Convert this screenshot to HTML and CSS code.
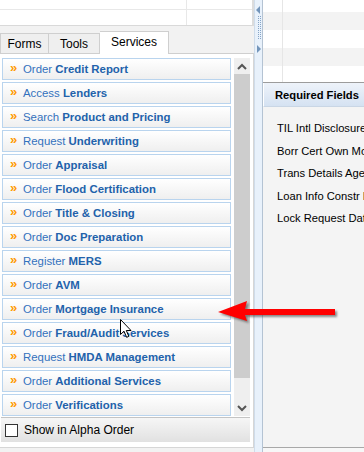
FILE: index.html
```
<!DOCTYPE html>
<html>
<head>
<meta charset="utf-8">
<link rel="stylesheet" href="styles.css">
</head>
<body>
<div class="app">
  <div class="left">
    <div class="topgrid">
      <div class="tg-row tg-first"><div class="tg-c1"></div><div class="tg-c2"></div></div>
      <div class="tg-row tg-second"><div class="tg-c1"></div><div class="tg-c2"></div></div>
    </div>
    <div class="tabs">
      <div class="tab tab-forms">Forms</div>
      <div class="tab tab-tools">Tools</div>
      <div class="tab tab-active">Services</div>
    </div>
    <div class="panel">
      <div class="list">
        <div class="items">
          <div class="item"><span class="raquo">»</span><span>Order <b>Credit Report</b></span></div>
          <div class="item"><span class="raquo">»</span><span>Access <b>Lenders</b></span></div>
          <div class="item"><span class="raquo">»</span><span>Search <b>Product and Pricing</b></span></div>
          <div class="item"><span class="raquo">»</span><span>Request <b>Underwriting</b></span></div>
          <div class="item"><span class="raquo">»</span><span>Order <b>Appraisal</b></span></div>
          <div class="item"><span class="raquo">»</span><span>Order <b>Flood Certification</b></span></div>
          <div class="item"><span class="raquo">»</span><span>Order <b>Title &amp; Closing</b></span></div>
          <div class="item"><span class="raquo">»</span><span>Order <b>Doc Preparation</b></span></div>
          <div class="item"><span class="raquo">»</span><span>Register <b>MERS</b></span></div>
          <div class="item"><span class="raquo">»</span><span>Order <b>AVM</b></span></div>
          <div class="item"><span class="raquo">»</span><span>Order <b>Mortgage Insurance</b></span></div>
          <div class="item"><span class="raquo">»</span><span>Order <b>Fraud/Audit Services</b></span></div>
          <div class="item"><span class="raquo">»</span><span>Request <b>HMDA Management</b></span></div>
          <div class="item"><span class="raquo">»</span><span>Order <b>Additional Services</b></span></div>
          <div class="item"><span class="raquo">»</span><span>Order <b>Verifications</b></span></div>
        </div>
        <div class="scrollbar">
          <div class="sb-btn"><svg width="10" height="7" viewBox="0 0 10 7"><path d="M1 6 L5 2 L9 6" fill="none" stroke="#555" stroke-width="2"/></svg></div>
          <div class="sb-track"><div class="sb-thumb"></div></div>
          <div class="sb-btn"><svg width="10" height="7" viewBox="0 0 10 7"><path d="M1 1 L5 5 L9 1" fill="none" stroke="#555" stroke-width="2"/></svg></div>
        </div>
      </div>
      <div class="alpha"><span class="checkbox"></span><span>Show in Alpha Order</span></div>
    </div>
  </div>
  <div class="splitter">
    <div class="sp-arrow sp-left"></div>
    <div class="sp-dots"></div>
    <div class="sp-arrow sp-right"></div>
  </div>
  <div class="right">
    <div class="rgrid">
      <div class="rrow r-white r-h12"><div class="rc1"></div></div>
      <div class="rrow r-gray"><div class="rc1"></div></div>
      <div class="rrow r-white"><div class="rc1"></div></div>
      <div class="rrow r-gray"><div class="rc1"></div></div>
      <div class="rrow r-white r-last"><div class="rc1"></div></div>
    </div>
    <div class="rhead">Required Fields</div>
    <div class="rbody">
      <div>TIL Intl Disclosure</div>
      <div>Borr Cert Own Mortgage</div>
      <div>Trans Details Agency</div>
      <div>Loan Info Constr Loan</div>
      <div>Lock Request Date</div>
    </div>
  </div>
</div>
<svg class="redarrow" width="140" height="34" viewBox="0 0 140 34">
  <defs>
    <filter id="sh" x="-10%" y="-30%" width="130%" height="180%">
      <feGaussianBlur stdDeviation="1.2"/>
    </filter>
  </defs>
  <g transform="translate(2,2)" opacity="0.55" filter="url(#sh)">
    <polygon points="8,16 37,5 35,13 125,13 125,19 35,19 37,25" fill="#333"/>
  </g>
  <polygon points="8,16 37,5 35,13 125,13 125,19 35,19 37,25" fill="#ff0000"/>
</svg>
<svg class="cursor" width="13" height="20" viewBox="0 0 13 20">
  <path d="M0.5 0.5 L0.5 15.5 L4 12.2 L6.6 18.3 L8.8 17.4 L6.3 11.5 L11 11.5 Z" fill="#fff" stroke="#000" stroke-width="1"/>
</svg>
</body>
</html>
```
FILE: styles.css
```
* { box-sizing: border-box; }
html, body { margin: 0; padding: 0; }
body {
  width: 364px;
  height: 452px;
  overflow: hidden;
  background: #f7f7f7;
  font-family: "Liberation Sans", Arial, sans-serif;
  font-size: 12px;
  position: relative;
}
.app {
  display: flex;
  width: 364px;
  height: 452px;
  overflow: hidden;
}
.left {
  width: 254px;
  flex: none;
  background: #f2f2f2;
  display: flex;
  flex-direction: column;
}
.topgrid {
  height: 26px;
  background: #fff;
  border-bottom: 1px solid #d9d9d9;
  border-right: 2px solid #dcdcdc;
  display: flex;
  flex-direction: column;
}
.tg-row { display: flex; }
.tg-first { height: 10px; border-bottom: 1px solid #e8e8e8; }
.tg-second { flex: 1; }
.tg-c1 { width: 187px; border-right: 1px solid #e8e8e8; }
.tg-c2 { flex: 1; }
.tabs {
  height: 27px;
  display: flex;
  align-items: flex-end;
}
.tab {
  height: 20px;
  background: #efefef;
  border: 1px solid #cfcfcf;
  border-bottom: none;
  display: flex;
  align-items: center;
  justify-content: center;
  color: #000;
  font-size: 12px;
}
.tab-forms { width: 49px; }
.tab-tools { width: 51px; border-left: none; }
.tab-active {
  width: 69px;
  height: 23px;
  background: #fff;
  border-left: none;
  margin-bottom: -1px;
  position: relative;
  padding-bottom: 2px;
}
.panel {
  background: #fff;
  border-top: 1px solid #cfcfcf;
  border-right: 1px solid #d6d6d6;
  border-bottom: 1px solid #d6d6d6;
  padding: 4px 3px 5px 2px;
  display: flex;
  flex-direction: column;
}
.list {
  display: flex;
  gap: 3px;
}
.items {
  width: 230px;
  display: flex;
  flex-direction: column;
  gap: 2px;
}
.item {
  height: 22px;
  border: 1px solid #b9d4ee;
  background: linear-gradient(#ffffff, #efefef);
  display: flex;
  align-items: center;
  padding-left: 7px;
  color: #3371bd;
  font-size: 11.4px;
  white-space: nowrap;
}
.item b { color: #2262ab; }
.raquo {
  width: 13px;
  color: #ff9a00;
  font-weight: bold;
  font-size: 13px;
  line-height: 12px;
  margin-top: -2px;
}
.scrollbar {
  width: 16px;
  background: #efefef;
  display: flex;
  flex-direction: column;
}
.sb-btn {
  height: 16px;
  display: flex;
  align-items: center;
  justify-content: center;
}
.sb-track {
  flex: 1;
  display: flex;
  flex-direction: column;
}
.sb-thumb {
  height: 304px;
  background: #cdcdcd;
}
.alpha {
  margin-top: 1px;
  margin-left: -1px;
  height: 25px;
  border-top: 1px solid #c4c4c4;
  background: linear-gradient(#f6f6f6, #e1e1e1);
  display: flex;
  align-items: center;
  gap: 6px;
  padding-left: 4px;
  color: #000;
}
.checkbox {
  width: 13px;
  height: 13px;
  border: 1px solid #333;
  background: #fff;
}
.splitter {
  width: 9px;
  flex: none;
  background: #e8f1fb;
  border-left: 1px solid #cfdcea;
  border-right: 1px solid #b4c3d3;
  display: flex;
  flex-direction: column;
  align-items: center;
  padding-top: 6px;
}
.sp-arrow {
  width: 0;
  height: 0;
  border-top: 4px solid transparent;
  border-bottom: 4px solid transparent;
}
.sp-left { border-right: 4px solid #7395bb; margin-left: -1px; }
.sp-right { border-left: 4px solid #7395bb; margin-left: 1px; }
.sp-dots {
  width: 3px;
  height: 23px;
  margin: 2px 0 6px 1px;
  border-left: 1px dotted #86a4c6;
  border-right: 1px dotted #86a4c6;
}
.right {
  width: 101px;
  flex: none;
  height: 448px;
  display: flex;
  flex-direction: column;
  border-bottom: 1px solid #a8a8a8;
  overflow: hidden;
}
.rgrid {
  height: 83px;
  border-bottom: 1px solid #9c9c9c;
  display: flex;
  flex-direction: column;
}
.rrow { height: 18px; display: flex; }
.r-h12 { height: 12px; }
.r-last { height: 16px; }
.r-white { background: #fff; }
.r-gray { background: #f3f3f3; }
.rc1 { width: 20px; border-right: 1px solid #e6e6e6; }
.rhead {
  height: 24px;
  background: linear-gradient(#eef3fa, #d5e2f2);
  border-left: 1px solid #fff;
  border-bottom: 1px solid #c9d6e5;
  font-weight: bold;
  font-size: 11.2px;
  color: #000;
  display: flex;
  align-items: center;
  padding-left: 11px;
  white-space: nowrap;
}
.rbody {
  flex: 1;
  background: #f4f4f4;
  padding: 10px 0 0 14px;
  line-height: 22.5px;
  font-size: 11.2px;
  color: #000;
  white-space: nowrap;
}
.redarrow {
  position: absolute;
  left: 210px;
  top: 296px;
}
.cursor {
  position: absolute;
  left: 120px;
  top: 319px;
}
```
